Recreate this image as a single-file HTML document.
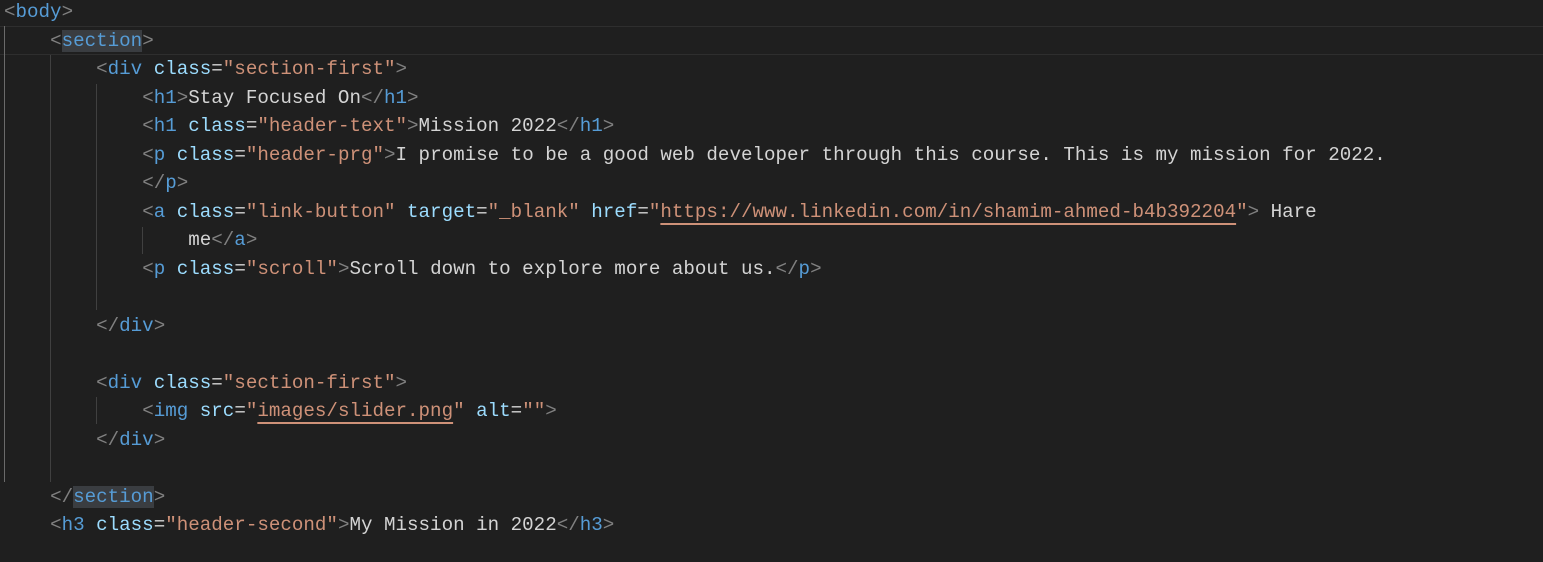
<!DOCTYPE html>
<html><head><meta charset="utf-8"><style>
html,body{margin:0;padding:0;background:#1f1f1f;width:1543px;height:562px;overflow:hidden}
#c{position:absolute;left:4px;top:-2px;font-family:"Liberation Mono",monospace;font-size:19.2px;color:#d4d4d4}
.l{height:28.5px;line-height:28.5px;white-space:pre;position:relative}
.b{color:#808080}.t{color:#569cd6}.a{color:#9cdcfe}.s{color:#ce9178}
.u{text-decoration:underline;text-decoration-color:#ce9178;text-decoration-thickness:2px;text-underline-offset:6px}
.cur{position:absolute;left:0;width:1543px;top:26px;height:27px;border-top:1px solid #2e2e2e;border-bottom:1px solid #2e2e2e}
.hl{background:#3a3d41}
.g{position:absolute;width:1px;background:#404040}
</style></head><body>
<div class="cur"></div>
<div class="g" style="left:4px;top:26px;height:456px;background:#6a6a6a"></div>
<div class="g" style="left:50px;top:55px;height:427px"></div>
<div class="g" style="left:96px;top:84px;height:226px"></div>
<div class="g" style="left:142px;top:227px;height:27px"></div>
<div class="g" style="left:96px;top:397px;height:27px"></div>
<div id="c">
<div class="l"><span class="b">&lt;</span><span class="t">body</span><span class="b">&gt;</span></div>
<div class="l">    <span class="b">&lt;</span><span class="t hl">section</span><span class="b">&gt;</span></div>
<div class="l">        <span class="b">&lt;</span><span class="t">div</span> <span class="a">class</span>=<span class="s">"section-first"</span><span class="b">&gt;</span></div>
<div class="l">            <span class="b">&lt;</span><span class="t">h1</span><span class="b">&gt;</span>Stay Focused On<span class="b">&lt;/</span><span class="t">h1</span><span class="b">&gt;</span></div>
<div class="l">            <span class="b">&lt;</span><span class="t">h1</span> <span class="a">class</span>=<span class="s">"header-text"</span><span class="b">&gt;</span>Mission 2022<span class="b">&lt;/</span><span class="t">h1</span><span class="b">&gt;</span></div>
<div class="l">            <span class="b">&lt;</span><span class="t">p</span> <span class="a">class</span>=<span class="s">"header-prg"</span><span class="b">&gt;</span>I promise to be a good web developer through this course. This is my mission for 2022.</div>
<div class="l">            <span class="b">&lt;/</span><span class="t">p</span><span class="b">&gt;</span></div>
<div class="l">            <span class="b">&lt;</span><span class="t">a</span> <span class="a">class</span>=<span class="s">"link-button"</span> <span class="a">target</span>=<span class="s">"_blank"</span> <span class="a">href</span>=<span class="s">"<span class="u">https://www.linkedin.com/in/shamim-ahmed-b4b392204</span>"</span><span class="b">&gt;</span> Hare</div>
<div class="l">                me<span class="b">&lt;/</span><span class="t">a</span><span class="b">&gt;</span></div>
<div class="l">            <span class="b">&lt;</span><span class="t">p</span> <span class="a">class</span>=<span class="s">"scroll"</span><span class="b">&gt;</span>Scroll down to explore more about us.<span class="b">&lt;/</span><span class="t">p</span><span class="b">&gt;</span></div>
<div class="l"> </div>
<div class="l">        <span class="b">&lt;/</span><span class="t">div</span><span class="b">&gt;</span></div>
<div class="l"> </div>
<div class="l">        <span class="b">&lt;</span><span class="t">div</span> <span class="a">class</span>=<span class="s">"section-first"</span><span class="b">&gt;</span></div>
<div class="l">            <span class="b">&lt;</span><span class="t">img</span> <span class="a">src</span>=<span class="s">"<span class="u">images/slider.png</span>"</span> <span class="a">alt</span>=<span class="s">""</span><span class="b">&gt;</span></div>
<div class="l">        <span class="b">&lt;/</span><span class="t">div</span><span class="b">&gt;</span></div>
<div class="l"> </div>
<div class="l">    <span class="b">&lt;/</span><span class="t hl">section</span><span class="b">&gt;</span></div>
<div class="l">    <span class="b">&lt;</span><span class="t">h3</span> <span class="a">class</span>=<span class="s">"header-second"</span><span class="b">&gt;</span>My Mission in 2022<span class="b">&lt;/</span><span class="t">h3</span><span class="b">&gt;</span></div>
</div>
</body></html>
